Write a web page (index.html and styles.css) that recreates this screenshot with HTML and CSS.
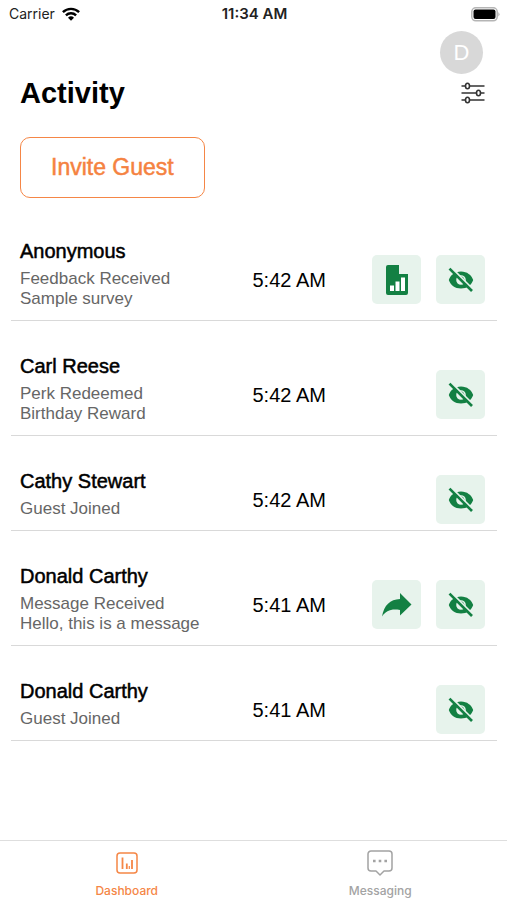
FILE: index.html
```html
<!DOCTYPE html>
<html lang="en">
<head>
<meta charset="utf-8">
<meta name="viewport" content="width=device-width, initial-scale=1">
<title>Activity</title>
<link rel="stylesheet" href="styles.css">
</head>
<body>
<svg class="sprite" aria-hidden="true">
  <symbol id="eye-off" viewBox="0 0 26 26">
    <path fill="currentColor" fill-rule="evenodd" d="M13 4.500C7 4.500 2.500 8 .8 13c1.700 5 6.200 8.500 12.200 8.500S23.500 18 25.200 13C23.500 8 19 4.500 13 4.500zm0 3.700a4.800 4.800 0 1 1 0 9.600 4.800 4.800 0 0 1 0-9.600z"/>
    <path fill="currentColor" d="M12 9.800a3.400 3.400 0 0 1 4.300 4.400z"/>
    <path stroke="#e7f3ec" stroke-width="2.200" d="M3.300 .8l22 22"/>
    <path stroke="currentColor" stroke-width="2.600" d="M1.500 1.700l22.500 22.300"/>
  </symbol>
  <symbol id="report" viewBox="0 0 22 30">
    <path fill="currentColor" d="M2 0h11v9h9v19a2 2 0 0 1-2 2H2a2 2 0 0 1-2-2V2a2 2 0 0 1 2-2z"/>
    <path fill="#fff" d="M4 20.500h4V26H4zM9.500 16.500h4V26h-4zM15 12.500h4V26h-4z"/>
  </symbol>
  <symbol id="share" viewBox="0 0 30 24">
    <path fill="currentColor" d="M0 23.500C2 12 8 6.500 18 6V0l11.500 11.500L18 22.500V17C9.500 15.500 4 17.500 0 23.500z"/>
  </symbol>
</svg>

<div class="app">
  <div class="status">
    <div class="carrier">
      <span>Carrier</span>
      <svg width="20" height="14" viewBox="0 0 18 14" fill="none" stroke="#000" stroke-width="2.400" aria-hidden="true">
        <path d="M.9 5.200a11.600 11.600 0 0 1 16.200 0M3.900 8.300a7.300 7.300 0 0 1 10.200 0"/>
        <path fill="#000" stroke="none" d="M9 13.800l-3-3a4.300 4.300 0 0 1 6 0z"/>
      </svg>
    </div>
    <time class="clock">11:34 AM</time>
    <svg class="battery" width="30" height="15" viewBox="0 0 30 15" aria-hidden="true">
      <rect x="1.800" y=".8" width="25.400" height="13" rx="4" fill="#fff" stroke="#b5b5b5" stroke-width="1.500"/>
      <rect x="3.500" y="2.500" width="22" height="9.600" rx="2" fill="#000"/>
      <path d="M28.300 5q2.400 2.300 0 4.600z" fill="#b5b5b5"/>
    </svg>
  </div>

  <header class="header">
    <button class="avatar" type="button" aria-label="Profile">D</button>
    <div class="title-row">
      <h1>Activity</h1>
      <button class="filter" type="button" aria-label="Filter">
        <svg width="24" height="22" viewBox="0 0 24 22" fill="#fff" stroke="#333" stroke-width="1.600" aria-hidden="true">
          <path d="M.5 4h23M.5 11h23M.5 18h23"/>
          <ellipse cx="6.500" cy="4" rx="2" ry="2.700"/>
          <ellipse cx="17.500" cy="11" rx="2" ry="2.700"/>
          <ellipse cx="6.500" cy="18" rx="2" ry="2.700"/>
        </svg>
      </button>
    </div>
    <button class="invite" type="button">Invite Guest</button>
  </header>

  <main>
    <ul class="list">
      <li class="row">
        <div class="info"><h2>Anonymous</h2><p>Feedback Received</p><p>Sample survey</p></div>
        <time class="time">5:42 AM</time>
        <div class="actions">
          <button class="action" type="button" aria-label="Survey report"><svg width="22" height="30"><use href="#report"/></svg></button>
          <button class="action" type="button" aria-label="Hide"><svg width="26" height="26"><use href="#eye-off"/></svg></button>
        </div>
      </li>
      <li class="row">
        <div class="info"><h2>Carl Reese</h2><p>Perk Redeemed</p><p>Birthday Reward</p></div>
        <time class="time">5:42 AM</time>
        <div class="actions">
          <button class="action" type="button" aria-label="Hide"><svg width="26" height="26"><use href="#eye-off"/></svg></button>
        </div>
      </li>
      <li class="row">
        <div class="info"><h2>Cathy Stewart</h2><p>Guest Joined</p></div>
        <time class="time">5:42 AM</time>
        <div class="actions">
          <button class="action" type="button" aria-label="Hide"><svg width="26" height="26"><use href="#eye-off"/></svg></button>
        </div>
      </li>
      <li class="row">
        <div class="info"><h2>Donald Carthy</h2><p>Message Received</p><p>Hello, this is a message</p></div>
        <time class="time">5:41 AM</time>
        <div class="actions">
          <button class="action" type="button" aria-label="Reply"><svg width="30" height="24"><use href="#share"/></svg></button>
          <button class="action" type="button" aria-label="Hide"><svg width="26" height="26"><use href="#eye-off"/></svg></button>
        </div>
      </li>
      <li class="row">
        <div class="info"><h2>Donald Carthy</h2><p>Guest Joined</p></div>
        <time class="time">5:41 AM</time>
        <div class="actions">
          <button class="action" type="button" aria-label="Hide"><svg width="26" height="26"><use href="#eye-off"/></svg></button>
        </div>
      </li>
    </ul>
  </main>

  <nav class="tabs">
    <a class="tab active" href="#dashboard">
      <svg width="26" height="26" viewBox="0 0 26 26" fill="none" stroke="currentColor" stroke-width="1.500" aria-hidden="true">
        <rect x="3" y="3" width="20" height="20" rx="3"/>
        <path stroke-width="1.800" d="M8.500 7.500v11.500M12.800 13.500v5.500M18 10v9"/>
        <path stroke-width="1.200" d="M15.300 16v3"/>
      </svg>
      <span>Dashboard</span>
    </a>
    <a class="tab" href="#messaging">
      <svg width="26" height="26" viewBox="0 0 26 26" fill="none" stroke="currentColor" stroke-width="1.500" aria-hidden="true">
        <path stroke-linejoin="round" d="M4 1h18a3 3 0 0 1 3 3v14a3 3 0 0 1-3 3h-5l-4 4-4-4H4a3 3 0 0 1-3-3V4a3 3 0 0 1 3-3z"/>
        <path fill="currentColor" stroke="none" d="M6 9.700h2.600v2.600H6zM11.700 9.700h2.600v2.600h-2.600zM17.400 9.700H20v2.600h-2.600z"/>
      </svg>
      <span>Messaging</span>
    </a>
  </nav>
</div>
</body>
</html>
```

FILE: styles.css
```css
* {
  box-sizing: border-box;
}

body,
h1,
h2,
p,
ul {
  margin: 0;
  padding: 0;
}

body {
  background: #fff;
  color: #000;
  font-family: "Liberation Sans", Arial, sans-serif;
}

button {
  padding: 0;
  border: 0;
  background: none;
  font-family: inherit;
  cursor: pointer;
}

svg {
  display: block;
}

.sprite {
  display: none;
}

.app {
  display: flex;
  flex-direction: column;
  min-height: 100vh;
}

.status {
  display: grid;
  grid-template-columns: 1fr auto 1fr;
  align-items: center;
  height: 28px;
  padding: 0 7px 0 9px;
  font: 14px/28px Inter, sans-serif;
  color: #222;
}

.carrier {
  display: flex;
  align-items: center;
  gap: 6px;
}

.clock {
  font-size: 15px;
  font-weight: 600;
}

.battery {
  justify-self: end;
}

.header {
  display: flex;
  flex-direction: column;
  padding: 3px 22px 0 20px;
}

.avatar {
  align-self: flex-end;
  width: 43px;
  height: 43px;
  margin-right: 2px;
  border-radius: 50%;
  background: #d8d8d8;
  color: #fff;
  font-size: 22px;
}

.title-row {
  display: flex;
  align-items: center;
  justify-content: space-between;
  height: 38px;
}

h1 {
  font-size: 29px;
  line-height: 38px;
}

.invite {
  align-self: flex-start;
  height: 61px;
  margin-top: 25px;
  padding: 0 30px;
  border: 1px solid #f58646;
  border-radius: 10px;
  color: #f58240;
  font-size: 23px;
  -webkit-text-stroke: 0.5px;
}

.list {
  margin: 8px 10px 0 11px;
  list-style: none;
}

.row {
  display: grid;
  grid-template-columns: 50% 1fr auto;
  align-items: center;
  padding: 33px 12px 0 9px;
  border-bottom: 1px solid #d9d9d9;
}

.info {
  padding-bottom: 11px;
}

h2 {
  margin-bottom: 6px;
  font-size: 20px;
  font-weight: 400;
  line-height: 24px;
  -webkit-text-stroke: 0.5px;
}

p {
  color: #666;
  font-size: 17px;
  line-height: 20px;
}

.time {
  padding-top: 2px;
  font-size: 20px;
}

.actions {
  display: flex;
  justify-content: flex-end;
  gap: 15px;
}

.action {
  display: grid;
  place-items: center;
  width: 49px;
  height: 49px;
  border-radius: 5px;
  background: #e7f3ec;
  color: #138043;
}

.tabs {
  display: grid;
  grid-template-columns: 1fr 1fr;
  height: 60px;
  margin-top: auto;
  border-top: 1px solid #dedede;
}

.tab {
  display: flex;
  flex-direction: column;
  align-items: center;
  gap: 7px;
  padding-top: 9px;
  color: #a3a3a3;
  font: 500 12px/16px Inter, sans-serif;
  text-decoration: none;
}

.active {
  color: #f58646;
}
```
